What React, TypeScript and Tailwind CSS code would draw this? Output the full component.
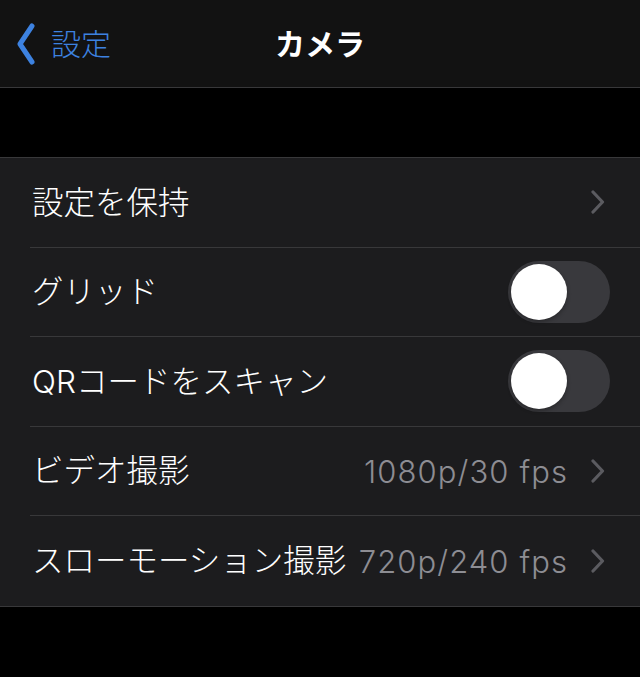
import React from "react";

const FONT = {
  fontFamily:
    'Inter, Roboto, "Noto Sans CJK JP", "Noto Sans", sans-serif',
};

function Chevron() {
  return (
    <svg width="16" height="24" viewBox="0 0 16 24" className="shrink-0">
      <path
        d="M3 2 L12.5 12 L3 22"
        fill="none"
        stroke="#5b5b60"
        strokeWidth="3.2"
        strokeLinecap="round"
        strokeLinejoin="round"
      />
    </svg>
  );
}

function Toggle() {
  return (
    <div className="flex h-[62px] w-[102px] shrink-0 items-center rounded-full bg-[#39393d] pl-[3px]">
      <div className="h-[56px] w-[56px] rounded-full bg-white shadow-[0_2px_4px_rgba(0,0,0,0.3)]" />
    </div>
  );
}

type Row = {
  label: string;
  kind: "link" | "toggle";
  value?: string;
};

const rows: Row[] = [
  { label: "設定を保持", kind: "link" },
  { label: "グリッド", kind: "toggle" },
  { label: "QRコードをスキャン", kind: "toggle" },
  { label: "ビデオ撮影", kind: "link", value: "1080p/30 fps" },
  { label: "スローモーション撮影", kind: "link", value: "720p/240 fps" },
];

export default function App() {
  return (
    <div className="h-[677px] w-[640px] overflow-hidden bg-black" style={FONT}>
      <header className="relative flex h-[88px] items-center border-b border-[#38383a] bg-[#121212]">
        <div className="flex items-center pl-[17px]">
          <svg width="18" height="42" viewBox="0 0 18 42">
            <path
              d="M15 3 L3 21 L15 39"
              fill="none"
              stroke="#3d82e0"
              strokeWidth="5"
              strokeLinecap="round"
              strokeLinejoin="round"
            />
          </svg>
          <span className="ml-[16px] text-[30px] font-light leading-none text-[#3d82e0]">
            設定
          </span>
        </div>
        <h1 className="absolute left-1/2 top-1/2 -translate-x-1/2 -translate-y-1/2 text-[30px] font-bold leading-none text-white">
          カメラ
        </h1>
      </header>

      <div className="h-[69px]" />

      <section className="border-y border-[#38383a] bg-[#1c1c1e]">
        {rows.map((row, i) => (
          <div key={row.label} className="pl-[30px]">
            <div
              className={
                "flex h-[89.6px] items-center pr-[30px] " +
                (i < rows.length - 1 ? "border-b border-[#38383a]" : "")
              }
            >
              <span className="pl-[2px] text-[31.5px] font-light leading-none text-white">
                {row.label}
              </span>
              <div className="ml-auto flex items-center gap-[22px]">
                {row.value && (
                  <span className="text-[31px] font-light leading-none tracking-[0.035em] text-[#8d8d93]">
                    {row.value}
                  </span>
                )}
                {row.kind === "link" ? (
                  <span className="mr-[4px]">
                    <Chevron />
                  </span>
                ) : (
                  <Toggle />
                )}
              </div>
            </div>
          </div>
        ))}
      </section>
    </div>
  );
}
